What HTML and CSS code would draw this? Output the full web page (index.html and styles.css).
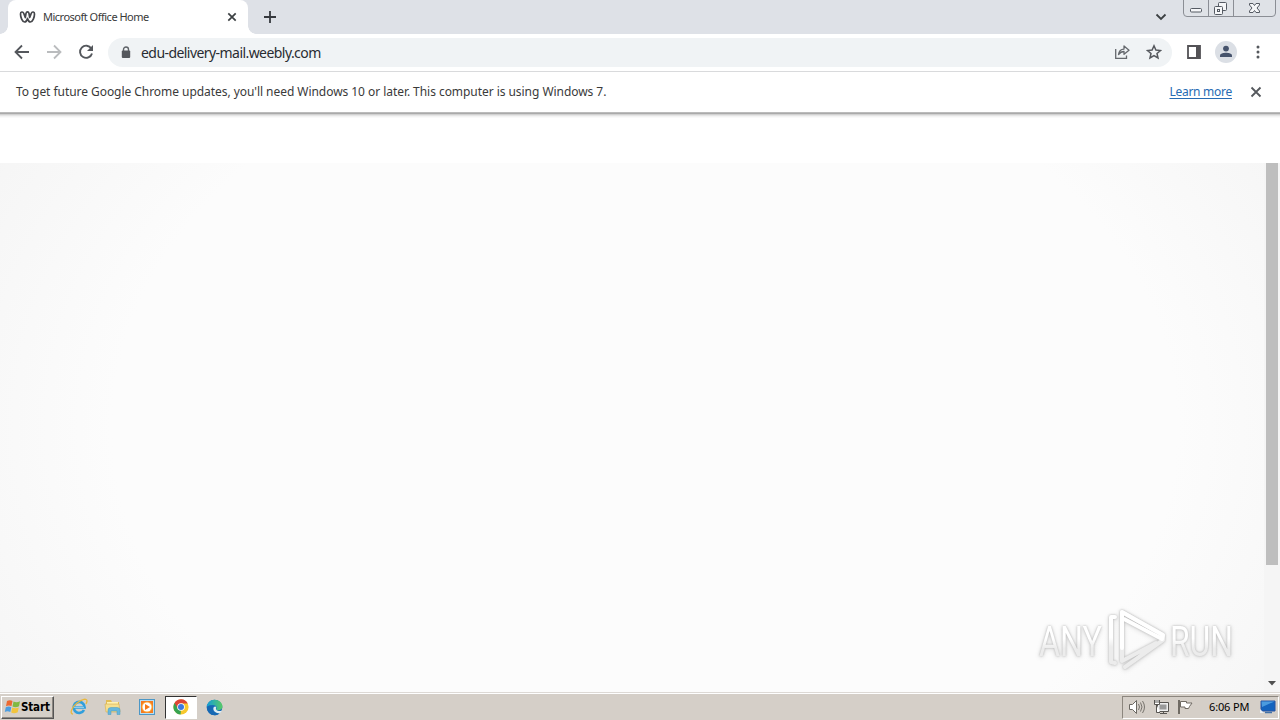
FILE: index.html
```html
<!DOCTYPE html>
<html lang="en">
<head>
<meta charset="utf-8">
<title>Microsoft Office Home</title>
<link rel="stylesheet" href="styles.css">
</head>
<body>
<div class="desktop">
  <header class="tabstrip">
    <div class="tab">
      <svg class="favicon" width="17" height="14" viewBox="0 0 17 14"><path d="M1.500 4C1.500 1.500 4 1.500 4.700 3.200L6.300 7.500 7 3.400C7.500 1.400 9.500 1.400 10 3.400L10.700 7.500 12.300 3.200C13 1.500 15.500 1.500 15.500 4 15.500 7 13.800 12 11.400 12 9.600 12 9 10.200 8.500 8.400 8 10.200 7.400 12 5.600 12 3.200 12 1.500 7 1.500 4Z" fill="#fff" stroke="#45474b" stroke-width="1.700" stroke-linejoin="round"/></svg>
      <span class="tab-title">Microsoft Office Home</span>
      <svg class="tab-close" width="10" height="10" viewBox="0 0 10 10"><path d="M1.300 1.300 8.700 8.700M8.700 1.300 1.300 8.700" stroke="#3c4043" stroke-width="1.700"/></svg>
    </div>
    <svg class="new-tab" width="12" height="12" viewBox="0 0 12 12"><path d="M6 0V12M0 6H12" stroke="#36393e" stroke-width="1.800"/></svg>
    <svg class="tab-search" width="12" height="8" viewBox="0 0 12 8"><path d="M1.500 1.500 6 6 10.500 1.500" fill="none" stroke="#3c4043" stroke-width="1.800"/></svg>
    <svg class="window-buttons" width="94" height="18" viewBox="0 0 94 18"><path d="M.5 0V13Q.5 16.500 4 16.500H89Q92.500 16.500 92.500 13V0M25.500 0V16M50.500 0V16" fill="#dfe2e7" stroke="#8b8e95"/><g fill="#f5f6f8" stroke="#555a63"><rect x="7.500" y="8.500" width="11" height="3.500" rx="1"/><rect x="35.500" y="2.500" width="8" height="8" rx="1"/><rect x="31.500" y="6.500" width="8" height="8" rx="1"/><rect x="34.500" y="9.500" width="2" height="2"/><path d="M66.500 3.500H70L71.500 5.500 73 3.500H76.500V5L74 8 76.500 11V12.500H73L71.500 10.500 70 12.500H66.500V11L69 8 66.500 5Z"/></g></svg>
  </header>

  <nav class="toolbar">
    <div class="nav-buttons">
      <svg width="16" height="16" viewBox="0 0 16 16"><path d="M15 8H2M8 1.500 1.500 8 8 14.500" fill="none" stroke="#54575c" stroke-width="1.800"/></svg>
      <svg width="16" height="16" viewBox="0 0 16 16"><path d="M1 8H14M8 1.500 14.500 8 8 14.500" fill="none" stroke="#babcbe" stroke-width="1.800"/></svg>
      <svg width="16" height="16" viewBox="0 0 16 16"><path d="M13.300 4.500A6.100 6.100 0 1 0 14 9.500" fill="none" stroke="#54575c" stroke-width="1.900"/><path d="M15 1V7H9Z" fill="#54575c"/></svg>
    </div>
    <div class="omnibox">
      <svg class="lock" width="10" height="13" viewBox="0 0 10 13"><path d="M2.500 5V3.500a2.500 2.500 0 0 1 5 0V5" fill="none" stroke="#5f6368" stroke-width="1.400"/><rect x=".8" y="4.500" width="8.400" height="7.500" rx="1" fill="#55585d"/></svg>
      <span class="url">edu-delivery-mail.weebly.com</span>
      <svg class="share" width="17" height="16" viewBox="0 0 17 16"><g fill="none" stroke="#65686d" stroke-width="1.300"><path d="M1.700 5V14.300H12.500V11.500"/><path d="M4.500 10.500C5 7 7 5.200 10 5.100V2L15 6.300 10 10.300V7.500C7.700 7.500 6 8.500 4.500 10.500Z" stroke-linejoin="round"/></g></svg>
      <svg class="star" width="16" height="16" viewBox="0 0 16 16"><path d="M8 1.800 9.900 6 14.500 6.500 11 9.500 12 14 8 11.600 4 14 5 9.500 1.500 6.500 6.100 6Z" fill="none" stroke="#55585d" stroke-width="1.500"/></svg>
    </div>
    <svg class="side-panel" width="14" height="14" viewBox="0 0 14 14"><path d="M1 1H13V13H1Z" fill="#fff" stroke="#535256" stroke-width="1.800"/><path d="M9 1H13V13H9Z" fill="#535256"/></svg>
    <svg class="profile" width="22" height="22" viewBox="0 0 22 22"><circle cx="11" cy="11" r="11" fill="#dbdfe5"/><circle cx="11" cy="7.600" r="2.900" fill="#46536c"/><path d="M5 16V14.500C5 12.500 8.500 11.700 11 11.700S17 12.500 17 14.500V16Z" fill="#46536c"/></svg>
    <svg class="menu" width="4" height="14" viewBox="0 0 4 14"><g fill="#55585d"><circle cx="2" cy="2" r="1.500"/><circle cx="2" cy="7" r="1.500"/><circle cx="2" cy="12" r="1.500"/></g></svg>
  </nav>

  <section class="infobar">
    <span class="info-text">To get future Google Chrome updates, you'll need Windows 10 or later. This computer is using Windows 7.</span>
    <span class="learn">Learn more</span>
    <svg class="info-close" width="12" height="12" viewBox="0 0 12 12"><path d="M1.500 1.500 10.500 10.500M10.500 1.500 1.500 10.500" stroke="#55585d" stroke-width="1.800"/></svg>
  </section>
  <div class="infobar-shadow"></div>
  <div class="page-header"></div>

  <main class="page">
    <div class="canvas"></div>
    <div class="scrollbar">
      <div class="thumb"></div>
      <svg width="8" height="5" viewBox="0 0 8 5"><path d="M0 0H8L4 4.500Z" fill="#505050"/></svg>
    </div>
    <svg class="watermark" width="214" height="76" viewBox="0 0 214 76">
      <defs><linearGradient id="fade" x1="0" y1="0" x2="0" y2="1"><stop offset=".45" stop-color="#fff"/><stop offset=".65" stop-color="#ececec"/></linearGradient></defs>
      <g class="brand">
        <text x="8" y="52" textLength="63" lengthAdjust="spacingAndGlyphs">ANY</text>
        <text x="139" y="52" textLength="63" lengthAdjust="spacingAndGlyphs">RUN</text>
      </g>
      <g fill="none" stroke-width="4" stroke-linejoin="round" stroke-linecap="round"><path d="M84 13H80V58L84 59" stroke="url(#fade)"/><path d="M125 39 91 57V8L132 31V36L94 63" stroke="#ececec"/><path d="M91 44V8L132 31 131 35 93 15" stroke="#fff"/></g>
    </svg>
  </main>

  <footer class="taskbar">
    <div class="start">
      <svg width="17" height="16" viewBox="0 0 17 16"><path d="M3 2Q6 .3 8.500 2L7.500 7Q4.500 5.700 2 7.200Z" fill="#ec6931"/><path d="M9.500 2.500Q12.500 4 16 2.300L15 7.200Q11.500 9 8.500 7.400Z" fill="#80b941"/><path d="M1.800 8.300Q4.800 6.800 7.300 8.200L6.300 13Q3.500 11.500.8 13Z" fill="#4c9de0"/><path d="M8.300 8.600Q11.500 10 14.800 8.500L13.700 13.200Q10.300 15 7.200 13.500Z" fill="#f2c43d"/></svg>
      <span>Start</span>
    </div>
    <div class="launchers">
      <svg width="18" height="18" viewBox="0 0 18 18"><path d="M14 12A5.500 5.500 0 1 1 14.600 9.500H5" fill="none" stroke="#309fdc" stroke-width="2.700"/><path d="M4 9.300H14" stroke="#d8f3ff" stroke-width=".7"/><path d="M3 16C-1 16 2 9 7 5S17 0 17 3C17 4 16.500 5 16 6" fill="none" stroke="#e9b83d" stroke-width="1.300"/></svg>
      <svg width="18" height="18" viewBox="0 0 18 18"><path d="M2 2H7L8 4H15V14H2Z" fill="#e2bd55"/><path d="M3 4H14V8H3Z" fill="#fff2af"/><path d="M1 6H15L16 14H2Z" fill="#f5df8f" stroke="#d5ab4e" stroke-width=".6"/><path d="M4 16.500V12Q4 9.500 7 9.500H13Q16 9.500 16 12V16.500H13V13H7V16.500Z" fill="#65b7dd" stroke="#489abe" stroke-width=".5"/></svg>
      <svg width="18" height="18" viewBox="0 0 18 18"><rect x="1.500" y="1.500" width="15" height="15" fill="#b7dff4" stroke="#4c97c6"/><path d="M3 3H15V15H3Z" fill="#f47b20"/><circle cx="9" cy="9" r="5.500" fill="#ffaa39"/><circle cx="9" cy="9" r="4.500" fill="#fff"/><path d="M7 6 12 9 7 12Z" fill="#f57b18"/></svg>
    </div>
    <div class="active-app">
      <svg width="16" height="16" viewBox="0 0 16 16"><circle cx="8" cy="8" r="7.600" fill="#f7c82d"/><path d="M1.500 4 8 8 7.600 15.600A7.600 7.600 0 0 1 1.500 4Z" fill="#36a351"/><path d="M1.500 4A7.600 7.600 0 0 1 14.800 4.500H8L5 9.700Z" fill="#dc4536"/><circle cx="8" cy="8" r="3.800" fill="#fff"/><circle cx="8" cy="8" r="3" fill="#3b79df"/></svg>
    </div>
    <svg class="edge" width="17" height="17" viewBox="0 0 17 17"><defs><linearGradient id="sea"><stop stop-color="#159ed8"/><stop offset="1" stop-color="#58ca65"/></linearGradient></defs><circle cx="8.500" cy="8.500" r="7.800" fill="#176bb8"/><path d="M.8 8C1 4 4 .7 8.500.7S16.500 4 16.500 7.500C16.500 10.500 13.500 12 10 11 11.500 9 10.500 6 7 6 4 6 1.500 7 .8 8Z" fill="url(#sea)"/><path d="M10.200 8.500C9 11 12 13 16 11.700L14 14.500C10 14.500 6.500 12 7.500 8.500Q9.500 6.500 10.200 8.500Z" fill="#e1edf1"/><path d="M7 8C5 11 8 15 13.500 14.500 8 19 1 14 .9 9 2 6 5 6 7 8Z" fill="#1768b3"/></svg>
    <div class="tray">
      <svg width="18" height="18" viewBox="0 0 18 18"><path d="M1.500 6.500H4.500L8.500 2.500V15.500L4.500 11.500H1.500Z" fill="#fff" stroke="#6b6862"/><path d="M10.500 6Q12.500 9 10.500 12M12.500 4.500Q15.500 9 12.500 13.500M14.500 3Q18.500 9 14.500 15" fill="none" stroke="#77736d"/></svg>
      <svg width="18" height="18" viewBox="0 0 18 18"><path d="M5.500 4.500H16.500V13.500H5.500Z" fill="#eee" stroke="#575450"/><path d="M7.500 6.500H14.500V11.500H7.500Z" fill="#999"/><path d="M8 15.500H15M11.500 13.500V15" stroke="#575450"/><path d="M2.500 2V6.500H7.500V2M4 2V5M6 2V5M4.500 6.500V14.500H8" fill="#fff" stroke="#575450"/></svg>
      <svg width="18" height="18" viewBox="0 0 18 18"><path d="M3 2V16" stroke="#706b64" stroke-width="2"/><path d="M4.500 3.500H10.500V5H16L13.500 8.500 12.500 10.500H9V9H4.500Z" fill="#fff" stroke="#706b64"/></svg>
      <span class="clock">6:06 PM</span>
      <svg class="monitor" width="16" height="14" viewBox="0 0 16 14"><path d="M1 1H15V11H1Z" fill="#1463be" stroke="#2b55a1"/><path d="M1.500 1.500H14.500L2 7Z" fill="#4b9bdf"/><path d="M5 12.500H12" stroke="#4372a8" stroke-width="1.500"/><path d="M0 9 4 13H0Z" fill="#e9eef2"/></svg>
    </div>
  </footer>
</div>
</body>
</html>
```
FILE: styles.css
```css
* { box-sizing: border-box; }
body { margin: 0; font-family: "Noto Sans", sans-serif; color: #3a3a3a; }
svg { display: block; flex-shrink: 0; }
.desktop { width: 1280px; height: 720px; display: flex; flex-direction: column; overflow: hidden; background: #fff; }
.tabstrip { height: 34px; flex: none; display: flex; align-items: flex-start; background: #dee1e7; padding-left: 8px; }
.tab { width: 240px; height: 34px; display: flex; align-items: center; background: #fff; border-radius: 8px 8px 0 0; padding: 0 11px 0 12px; position: relative; }
.tab::before, .tab::after { content: ""; position: absolute; bottom: 0; width: 8px; height: 8px; }
.tab::before { left: -8px; background: radial-gradient(circle at 0 0, transparent 7.500px, #fff 8px); }
.tab::after { right: -8px; background: radial-gradient(circle at 100% 0, transparent 7.500px, #fff 8px); }
.favicon { margin-left: -1px; }
.tab-title { font-size: 11px; line-height: 16px; margin-left: 7px; white-space: nowrap; letter-spacing: -.5px; }
.tab-close { margin-left: auto; }
.new-tab { margin: 11px 0 0 16px; }
.tab-search { margin: 13px 16px 0 auto; }
.window-buttons { margin-right: 3px; }
.toolbar { height: 38px; flex: none; display: flex; align-items: center; padding: 0 20px 1px 14px; border-bottom: 1px solid #d9dadc; }
.nav-buttons { display: flex; gap: 16px; width: 94px; }
.omnibox { width: 1064px; height: 29px; border-radius: 15px; background: #f0f3f5; display: flex; align-items: center; padding: 0 10px 0 13px; }
.url { font-size: 14px; line-height: 20px; color: #292c31; margin: 2px 0 0 10px; white-space: nowrap; letter-spacing: -.56px; }
.share { margin: 0 15px 0 auto; }
.side-panel { margin-left: 15px; }
.profile { margin-left: 14px; }
.menu { margin-left: 19px; }
.infobar { height: 40px; flex: none; display: flex; align-items: center; padding: 0 18px 0 16px; font-size: 12px; line-height: 18px; }
.info-text { white-space: nowrap; letter-spacing: -.05px; }
.learn { color: #276bb3; text-decoration: underline; text-underline-offset: 2px; margin: 0 18px 0 auto; white-space: nowrap; letter-spacing: -.27px; }
.infobar-shadow { height: 7px; flex: none; background: linear-gradient(#bbb 0 1px, #aaa 1px 2px, #d1d1d1 2px 3px, #e5e5e5 3px 4px, #f3f3f3 4px 5px, #fafafa 5px 6px, #fff 6px); }
.page-header { height: 44px; flex: none; }
.page { height: 529px; flex: none; display: flex; position: relative; background: #fcfcfc; }
.canvas { width: 1264px; background: radial-gradient(ellipse 760px 560px at 51% 50%, #fcfcfc 0 70%, #f8f8f8 87%, #f5f5f5 100%); }
.scrollbar { width: 16px; display: flex; flex-direction: column; align-items: center; justify-content: space-between; background: #f5f5f5; padding-bottom: 6px; }
.thumb { width: 12px; height: 402px; background: #bebebe; }
.watermark { position: absolute; left: 1031px; top: 441px; filter: drop-shadow(0 0 1px #b5b5b5) drop-shadow(0 1px 2px #ddd); }
.brand { font: 43px/1 Roboto, sans-serif; fill: url(#fade); }
.taskbar { height: 28px; flex: none; display: flex; align-items: center; background: #d5cfc8; border-top: 1px solid #ddd9d5; box-shadow: inset 0 1px #fff; padding: 1px 1px 0 1px; }
.start { width: 53px; height: 23px; display: flex; align-items: center; padding-left: 2px; border: 1px solid; border-color: #fff #555 #555 #fff; box-shadow: inset -1px -1px #8c8781; }
.start span { font: bold 11.500px "DejaVu Sans Condensed", "DejaVu Sans", sans-serif; color: #000; letter-spacing: -.15px; }
.launchers { display: flex; gap: 16px; margin-left: 16px; }
.active-app { width: 32px; height: 23px; display: flex; align-items: center; justify-content: center; margin-left: 9px; background: #fff; border: 1px solid; border-color: #333 #fff #fff #333; }
.edge { margin-left: 9px; }
.tray { width: 157px; height: 23px; display: flex; align-items: center; margin-left: auto; padding: 0 2px 0 5px; gap: 6px; border: 1px solid; border-color: #8c867e #fff #fff #8c867e; }
.clock { font-size: 11px; line-height: 16px; color: #000; margin-left: 9px; white-space: nowrap; letter-spacing: -.15px; }
.monitor { margin-left: auto; }
```
